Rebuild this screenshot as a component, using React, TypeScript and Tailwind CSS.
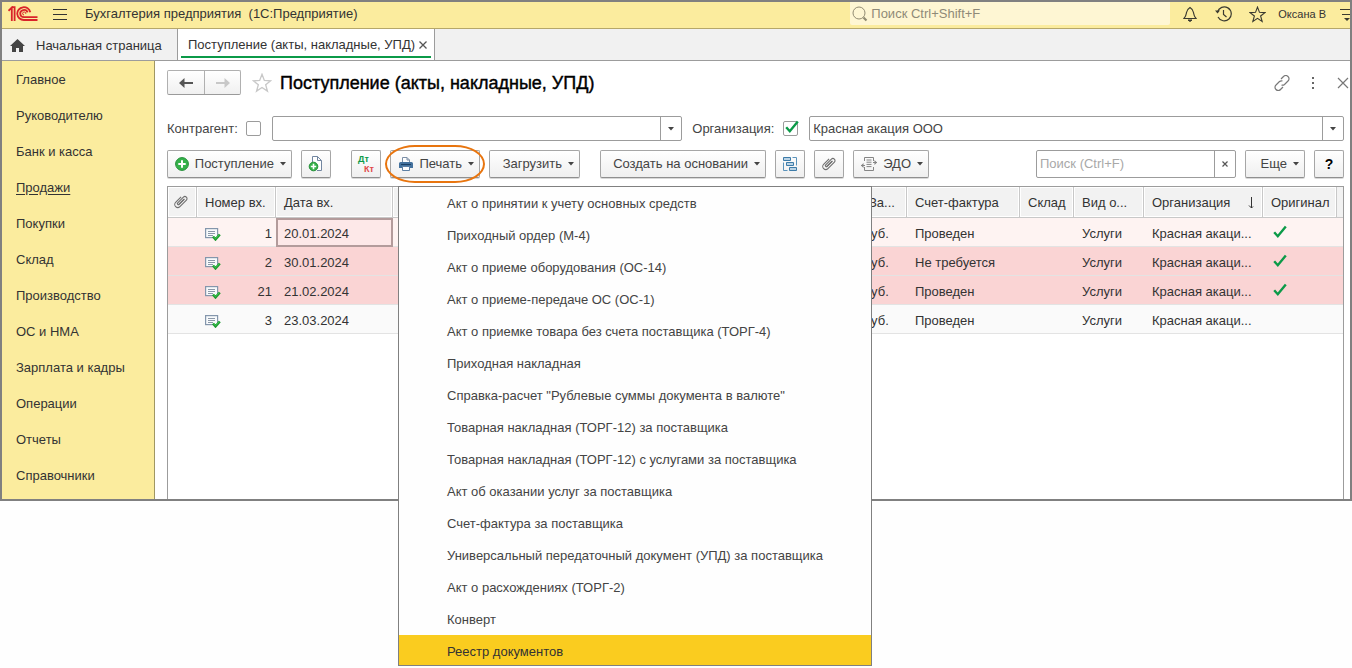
import type { ReactNode } from 'react';

const sections = [
  'Главное', 'Руководителю', 'Банк и касса', 'Продажи', 'Покупки', 'Склад',
  'Производство', 'ОС и НМА', 'Зарплата и кадры', 'Операции', 'Отчеты', 'Справочники',
];

const printForms = [
  'Акт о принятии к учету основных средств',
  'Приходный ордер (М-4)',
  'Акт о приеме оборудования (ОС-14)',
  'Акт о приеме-передаче ОС (ОС-1)',
  'Акт о приемке товара без счета поставщика (ТОРГ-4)',
  'Приходная накладная',
  'Справка-расчет "Рублевые суммы документа в валюте"',
  'Товарная накладная (ТОРГ-12) за поставщика',
  'Товарная накладная (ТОРГ-12) с услугами за поставщика',
  'Акт об оказании услуг за поставщика',
  'Счет-фактура за поставщика',
  'Универсальный передаточный документ (УПД) за поставщика',
  'Акт о расхождениях (ТОРГ-2)',
  'Конверт',
];

const documents = [
  { number: '1', date: '20.01.2024', invoice: 'Проведен', original: true, tone: 'bg-[#fef3f2]' },
  { number: '2', date: '30.01.2024', invoice: 'Не требуется', original: true, tone: 'bg-[#fad4d4]' },
  { number: '21', date: '21.02.2024', invoice: 'Проведен', original: true, tone: 'bg-[#fad4d4]' },
  { number: '3', date: '23.03.2024', invoice: 'Проведен', original: false, tone: 'bg-[#fafafa]' },
];

function Logo() {
  return (
    <svg width="30" height="16" viewBox="0 0 30 16" fill="none" stroke="#d9232a" strokeWidth="1.800" aria-label="1С" role="img">
      <path d="M.5 4.800 3.800 1.500V15M6.600 15V1.200H3.500" />
      <path d="M22.300 6.200A6.600 6.400 0 1 0 15.800 14H29.500" />
      <path d="M19.600 6.400A3.800 3.600 0 1 0 16 11.200H29.500" />
      <path d="M17.800 7.800A1.600 1.500 0 1 0 16 9" strokeWidth="1" />
    </svg>
  );
}

function Caret() {
  return (
    <svg width="6" height="4" viewBox="0 0 6 4" fill="#444" aria-hidden="true" className="shrink-0">
      <path d="M0 0h6L3 3.500z" />
    </svg>
  );
}

function Clip() {
  return (
    <svg width="14" height="14" viewBox="0 0 14 14" fill="none" stroke="#6f6f6f" strokeWidth="1.100" aria-hidden="true">
      <path d="M10.500 4 5.200 9.300a1 1 0 0 1-1.500-1.500l5.700-5.600a2 2 0 0 1 3 2.900l-6.500 6.500a3 3 0 0 1-4.300-4.200l5.500-5.500" />
      <path d="m4.200 9.800 5.800-5.700" />
    </svg>
  );
}

function Check({ size }: { size: number }) {
  return (
    <svg width={size} height={size} viewBox="0 0 14 14" fill="none" stroke="#0b9a48" strokeWidth="2.400" aria-hidden="true">
      <path d="m1.200 7.200 3.600 4L12.800 1.500" />
    </svg>
  );
}

function RowIcon() {
  return (
    <svg width="16" height="14" viewBox="0 0 16 14" fill="none" aria-hidden="true">
      <rect x=".600" y="1.600" width="12" height="9" fill="#f8fafc" stroke="#8496ac" strokeWidth="1.200" />
      <path d="M3 4.500h7M3 6.500h7M3 8.500h5" stroke="#8b98a8" />
      <path d="m8 9.500 2.500 2.800L14.800 7.500" stroke="#1f9b31" strokeWidth="2.600" />
      <path d="m8.500 9.500 2 2.200 3.800-4" stroke="#3ac94e" strokeWidth="1" />
    </svg>
  );
}

function PlusCircle({ size }: { size: number }) {
  return (
    <svg width={size} height={size} viewBox="0 0 14 14" aria-hidden="true" className="shrink-0">
      <circle cx="7" cy="7" r="6.400" fill="#35b24a" stroke="#248f38" />
      <path d="M7 3.300v7.400M3.300 7h7.400" stroke="#fff" strokeWidth="2" />
    </svg>
  );
}

function CopyDoc() {
  return (
    <svg width="16" height="16" viewBox="0 0 16 16" fill="none" aria-hidden="true">
      <path d="M4.500 6V.5h5l4 4v10H9M9.500.5v4h4" fill="#fff" stroke="#7286a0" />
      <circle cx="5.500" cy="10.500" r="4.300" fill="#35b24a" stroke="#248f38" />
      <path d="M5.500 7.800v5.400M2.800 10.500h5.400" stroke="#fff" strokeWidth="1.600" />
    </svg>
  );
}

function Printer() {
  return (
    <svg width="14" height="14" viewBox="0 0 14 14" aria-hidden="true" className="shrink-0">
      <path d="M3.500 5V.5h4.500l2.500 2.500v2M8 .5V3h2.500" fill="#fff" stroke="#7b8ea6" />
      <path d="M1.500 5h11a1.500 1.500 0 0 1 1.500 1.500V11H0V6.500A1.500 1.500 0 0 1 1.500 5z" fill="#44729e" />
      <path d="M2 7.500h10" stroke="#1c4064" />
      <path d="M3.500 9.500h7v4h-7z" fill="#fff" stroke="#5d7fa3" />
    </svg>
  );
}

function Structure() {
  return (
    <svg width="15" height="15" viewBox="0 0 15 15" aria-hidden="true">
      <g fill="#b9d3e6" stroke="#3d7ba8">
        <path d="M.5.500h7v3h-7zM3.500 5.500h7v3h-7zM6.500 10.500h7v3h-7z" />
      </g>
      <path d="M9.500.5h4v8M.5 5.500v8h4" fill="none" stroke="#5b93bb" />
    </svg>
  );
}

function Exchange() {
  return (
    <svg width="16" height="14" viewBox="0 0 16 14" fill="none" stroke="#858585" aria-hidden="true" className="shrink-0">
      <path d="M3.500 4V.5h9V4M3.500 10v3.500h9V10M5.500 3h5M5.500 5.200h5M5.500 7.400h5M5.500 9.600h5" />
      <path d="M0 8.500h4M12 5.500h4" />
      <path d="m2.500 6-2.500 2.500L2.500 11zM13.500 3l2.500 2.500L13.500 8z" fill="#858585" stroke="none" />
    </svg>
  );
}

function Star({ size, color }: { size: number; color: string }) {
  return (
    <svg width={size} height={size} viewBox="0 0 18 18" fill="none" stroke={color} strokeWidth="1.200" aria-hidden="true">
      <path d="m9 1.200 2.100 5.500 5.700.3-4.500 3.600 1.600 5.700L9 13.100l-4.900 3.200 1.600-5.700L1.200 7l5.700-.3z" />
    </svg>
  );
}

function ToolButton({ label, width, children, caret = false }: { label?: string; width: string; children?: ReactNode; caret?: boolean }) {
  return (
    <button
      type="button"
      aria-label={label}
      className={`flex h-7 shrink-0 items-center gap-[6px] rounded-[2px] border border-[#a6a6a6] border-b-[#8f8f8f] bg-linear-to-b from-white to-[#efefef] whitespace-nowrap shadow-[0_1px_0_#d8d8d8] ${caret ? 'justify-end pr-[5px]' : 'justify-center'} ${width}`}
    >
      {children}
      {caret && <Caret />}
    </button>
  );
}

function Picker({ id, grow, value }: { id: string; grow: string; value: string }) {
  return (
    <div className={`relative flex h-[25px] min-w-0 rounded-[2px] border border-[#9c9c9c] bg-white ${grow}`}>
      <select id={id} className="min-w-0 flex-1 appearance-none bg-transparent pt-px pl-[3px] outline-none" defaultValue={value}>
        <option>{value}</option>
      </select>
      <span className="pointer-events-none absolute inset-y-0 right-0 flex w-[21px] items-center justify-center border-l border-[#9c9c9c]">
        <Caret />
      </span>
    </div>
  );
}

function TitleBar() {
  return (
    <header className="flex h-[27px] items-center overflow-hidden border-b border-[#b5a76a] bg-[#fbec9e] pb-[2px] pl-[6px]">
      <Logo />
      <button type="button" aria-label="Главное меню" className="ml-[15px]">
        <svg width="14" height="11" viewBox="0 0 14 11" stroke="#333" aria-hidden="true">
          <path d="M0 .5h14M0 5.500h14M0 10.500h14" />
        </svg>
      </button>
      <span className="ml-[18px] flex-1 whitespace-pre">Бухгалтерия предприятия  (1С:Предприятие)</span>
      <label className="flex h-[23px] w-[320px] items-center gap-[3px] self-start rounded-b-[2px] bg-[#fef6d3] pl-[2px] text-[#8f8a78]">
        <svg width="16" height="16" viewBox="0 0 16 16" fill="none" stroke="#918b72" aria-hidden="true">
          <circle cx="7" cy="7" r="6" />
          <path d="m11.500 11.500 3 3" strokeWidth="2.200" />
        </svg>
        <input aria-label="Поиск" placeholder="Поиск Ctrl+Shift+F" className="min-w-0 flex-1 bg-transparent outline-none placeholder:text-[#8f8a78]" />
      </label>
      <button type="button" aria-label="Уведомления" className="ml-[13px]">
        <svg width="14" height="16" viewBox="0 0 14 16" fill="none" stroke="#3a3a30" aria-hidden="true">
          <path d="M1 12.500c2-2 2-3 2.500-6C4 3.500 5.300 2.500 7 1.500c1.700 1 3 2 3.500 5 .5 3 .5 4 2.500 6z" strokeWidth="1.200" />
          <path d="M5 14h4l-2 1.500z" fill="#3a3a30" />
        </svg>
      </button>
      <button type="button" aria-label="История" className="ml-[18px]">
        <svg width="17" height="16" viewBox="0 0 17 16" fill="none" stroke="#3a3a30" strokeWidth="1.200" aria-hidden="true">
          <path d="M2.500 6A7 7 0 1 1 3 11M8.500 4v4.500l3 2.500" />
          <path d="M0 4.500h5L2.500 7.500z" fill="#3a3a30" stroke="none" />
        </svg>
      </button>
      <button type="button" aria-label="Избранное" className="ml-[17px]"><Star size={17} color="#3a3a30" /></button>
      <button type="button" className="ml-3 text-[11px] whitespace-nowrap">Оксана В</button>
      <button type="button" aria-label="Настройки" className="ml-[14px]">
        <svg width="10" height="14" viewBox="0 0 10 14" stroke="#3a3a30" aria-hidden="true">
          <path d="M0 2.500h10M2 7.500h8" />
          <path d="M4 11h6L7 14z" fill="#3a3a30" stroke="none" />
        </svg>
      </button>
    </header>
  );
}

function Tabs() {
  return (
    <nav className="flex h-8 items-stretch border-b border-[#9c9c9c] bg-[#f1f1f1]">
      <a href="#home" className="flex w-[175px] items-center pt-[2px] pl-[8px]">
        <svg width="15" height="13" viewBox="0 0 15 13" fill="#444" aria-hidden="true">
          <path d="M7.500 0 15 7h-2v6H9V9H6v4H2V7H0z" />
        </svg>
        <span className="ml-[11px] whitespace-nowrap">Начальная страница</span>
      </a>
      <div className="flex w-[258px] border-x border-[#9c9c9c] bg-white px-[3px] pb-[2px]">
        <div className="flex flex-1 items-center justify-between border-b-2 border-[#0b9a48] pt-[4px] pr-1 pl-[7px]">
          <a href="#receipts" className="whitespace-nowrap">Поступление (акты, накладные, УПД)</a>
          <button type="button" aria-label="Закрыть вкладку">
            <svg width="8" height="8" viewBox="0 0 8 8" stroke="#555" strokeWidth="1.300" aria-hidden="true">
              <path d="m.5.500 7 7M7.500.500l-7 7" />
            </svg>
          </button>
        </div>
      </div>
    </nav>
  );
}

function Heading() {
  return (
    <div className="-mr-[5px] flex items-center">
      <div className="flex h-[25px] shrink-0 rounded-[2px] border border-[#b0b0b0] border-b-[#9a9a9a] bg-linear-to-b from-white to-[#f0f0f0]">
        <button type="button" aria-label="Назад" className="flex w-9 items-center justify-center">
          <svg width="14" height="10" viewBox="0 0 14 10" fill="#555" aria-hidden="true">
            <path d="M0 5 5.500 0v4H14v2H5.500v4z" />
          </svg>
        </button>
        <button type="button" aria-label="Вперед" className="flex w-9 items-center justify-center border-l border-[#b0b0b0]">
          <svg width="14" height="10" viewBox="0 0 14 10" fill="#c8c8c8" aria-hidden="true">
            <path d="M14 5 8.500 0v4H0v2h8.500v4z" />
          </svg>
        </button>
      </div>
      <button type="button" aria-label="В избранное" className="ml-[11px]"><Star size={20} color="#c8c8c8" /></button>
      <h1 className="ml-2 flex-1 text-[18px] whitespace-nowrap text-black [-webkit-text-stroke:0.4px_black]">Поступление (акты, накладные, УПД)</h1>
      <button type="button" aria-label="Ссылка">
        <svg width="16" height="16" viewBox="0 0 16 16" fill="none" stroke="#777" strokeWidth="1.200" aria-hidden="true">
          <path d="m7 4 2.500-2.500a3 3 0 0 1 4.500 0 3 3 0 0 1 0 4.500L10.500 9.500a3 3 0 0 1-3 .5M9 12l-2.500 2.500a3 3 0 0 1-4.500 0 3 3 0 0 1 0-4.500L5.500 6.500a3 3 0 0 1 3-.5" />
        </svg>
      </button>
      <button type="button" aria-label="Действия" className="ml-[21px]">
        <svg width="4" height="12" viewBox="0 0 4 12" fill="#666" aria-hidden="true">
          <path d="M1 0h2v2H1zM1 5h2v2H1zM1 10h2v2H1z" />
        </svg>
      </button>
      <button type="button" aria-label="Закрыть" className="ml-[22px]">
        <svg width="12" height="12" viewBox="0 0 12 12" stroke="#777" strokeWidth="1.200" aria-hidden="true">
          <path d="m1 1 10 10M11 1 1 11" />
        </svg>
      </button>
    </div>
  );
}

function Filters() {
  return (
    <div className="mt-[21px] flex items-center text-[#444]">
      <label htmlFor="partner" className="w-[79px] shrink-0">Контрагент:</label>
      <input type="checkbox" aria-label="Отбор по контрагенту" className="h-[15px] w-[15px] shrink-0 appearance-none rounded-[2px] border border-[#9c9c9c] bg-white" />
      <Picker id="partner" grow="ml-[11px] flex-[410]" value="" />
      <label htmlFor="company" className="ml-[10px] w-[81px] shrink-0">Организация:</label>
      <span className="relative ml-[10px] flex shrink-0">
        <input type="checkbox" defaultChecked aria-label="Отбор по организации" className="h-[15px] w-[15px] appearance-none rounded-[2px] border border-[#9c9c9c] bg-white" />
        <span className="pointer-events-none absolute bottom-[2px] left-[2px]"><Check size={14} /></span>
      </span>
      <Picker id="company" grow="ml-[11px] flex-[535]" value="Красная акация ООО" />
    </div>
  );
}

function PrintMenu() {
  return (
    <div role="menu" className="absolute top-[36px] left-2 z-20 w-[474px] border border-[#808080] bg-[#fefefe]">
      {printForms.map((name) => (
        <button key={name} type="button" role="menuitem" className="flex h-8 w-full items-center pt-[2px] pl-12 whitespace-nowrap text-[#444]">
          {name}
        </button>
      ))}
      <button type="button" role="menuitem" className="flex h-[30px] w-full items-center bg-[#facc1f] pt-[4px] pl-12 whitespace-nowrap text-[#333]">
        Реестр документов
      </button>
    </div>
  );
}

function Toolbar() {
  return (
    <div className="mt-[9px] flex items-center gap-[9px] text-[#444]">
      <ToolButton width="w-[125px]" caret><PlusCircle size={14} />Поступление</ToolButton>
      <ToolButton width="w-[30px]" label="Скопировать"><CopyDoc /></ToolButton>
      <span className="ml-[11px] flex">
        <ToolButton width="w-[30px]">
          <span className="flex w-4 flex-col text-[9px] leading-[10px] font-bold">
            <span className="self-start text-[#0b9a48]">Дт</span>
            <span className="self-end text-[#e04848]">Кт</span>
          </span>
        </ToolButton>
      </span>
      <div className="relative">
        <ToolButton width="w-[90px]" caret><Printer />Печать</ToolButton>
        <span className="pointer-events-none absolute -inset-x-[5px] -inset-y-[5px] z-30 rounded-[30px/19px] border-2 border-[#e8750f]" />
        <PrintMenu />
      </div>
      <ToolButton width="w-[91px]" caret>Загрузить</ToolButton>
      <span className="ml-[11px] flex"><ToolButton width="w-[166px]" caret>Создать на основании</ToolButton></span>
      <ToolButton width="w-[30px]" label="Структура подчиненности"><Structure /></ToolButton>
      <ToolButton width="w-[30px]" label="Файлы"><Clip /></ToolButton>
      <ToolButton width="w-[76px]" caret><Exchange />ЭДО</ToolButton>
      <div className="ml-auto flex h-7 w-[200px] rounded-[2px] border border-[#9c9c9c] bg-white">
        <input aria-label="Поиск в списке" placeholder="Поиск (Ctrl+F)" className="min-w-0 flex-1 bg-transparent pl-[3px] outline-none placeholder:text-[#a8a8a8]" />
        <button type="button" aria-label="Очистить" className="flex w-[21px] items-center justify-center border-l border-[#9c9c9c]">
          <svg width="6" height="6" viewBox="0 0 6 6" stroke="#555" strokeWidth="1.200" aria-hidden="true">
            <path d="m.5.500 5 5M5.500.500l-5 5" />
          </svg>
        </button>
      </div>
      <ToolButton width="w-[60px]" caret>Еще</ToolButton>
      <ToolButton width="w-[30px]"><span className="text-[14px] font-bold text-black">?</span></ToolButton>
    </div>
  );
}

const headCell = 'h-[31px] border-r border-b border-[#c8c8c8] bg-[#f2f2f2] px-2 pt-[2px] text-left font-normal whitespace-nowrap shadow-[inset_0_0_0_1px_#fff]';
const cellLine = 'border-b border-[#e3e3e3] whitespace-nowrap overflow-hidden';
const bodyCell = `${cellLine} px-2 pt-[3px]`;

function DocumentTable() {
  return (
    <div className="mt-2 flex-1 overflow-hidden border border-b-0 border-[#9c9c9c] bg-white">
      <table className="w-full table-fixed border-separate border-spacing-0">
        <colgroup>
          <col className="w-[29px]" />
          <col className="w-[79px]" />
          <col className="w-[117px]" />
          <col />
          <col className="w-[46px]" />
          <col className="w-[113px]" />
          <col className="w-[54px]" />
          <col className="w-[70px]" />
          <col className="w-[119px]" />
          <col className="w-[74px]" />
          <col className="w-[6px]" />
        </colgroup>
        <thead>
          <tr>
            <th className="h-[31px] border-r border-b border-[#c8c8c8] bg-[#f2f2f2] pl-[6px] shadow-[inset_0_0_0_1px_#fff]"><Clip /></th>
            <th className={headCell}>Номер вх.</th>
            <th className={headCell}>Дата вх.</th>
            <th className={headCell} />
            <th className={headCell}>За...</th>
            <th className={headCell}>Счет-фактура</th>
            <th className={headCell}>Склад</th>
            <th className={headCell}>Вид о...</th>
            <th className={headCell}>
              <span className="flex items-center justify-between">
                Организация
                <svg width="6" height="12" viewBox="0 0 6 12" fill="none" stroke="#333" aria-hidden="true">
                  <path d="M3.500 0v11M1 8.500l2.500 2.500L5 9.500" />
                </svg>
              </span>
            </th>
            <th className={headCell}>Оригинал</th>
            <th className="border-b border-[#c8c8c8] bg-[#f2f2f2]" />
          </tr>
        </thead>
        <tbody>
          {documents.map((doc, index) => (
            <tr key={doc.number} className={`h-[29px] ${doc.tone}`}>
              <td className={bodyCell} />
              <td className={`${cellLine} pt-[3px] pr-1 pl-2`}>
                <span className="flex items-center justify-between"><RowIcon />{doc.number}</span>
              </td>
              <td className={index === 0 ? 'border-2 border-[#b39b9b] bg-[#fde8e8] px-[6px] pt-[2px]' : bodyCell}>{doc.date}</td>
              <td className={bodyCell} />
              <td className={`${cellLine} pt-[3px] pl-[3px]`}>руб.</td>
              <td className={bodyCell}>{doc.invoice}</td>
              <td className={bodyCell} />
              <td className={bodyCell}>Услуги</td>
              <td className={bodyCell}>Красная акаци...</td>
              <td className={`${cellLine} pl-[10px]`}>{doc.original && <Check size={14} />}</td>
              <td className={cellLine} />
            </tr>
          ))}
        </tbody>
      </table>
    </div>
  );
}

export default function App() {
  return (
    <div className="min-h-screen bg-[#fefefe] pb-[167px] font-['Liberation_Sans',Arial,sans-serif] text-[13px] leading-4 text-[#333]">
      <div className="border-2 border-[#808080]">
        <TitleBar />
        <Tabs />
        <div className="flex">
          <aside className="w-[153px] shrink-0 border-r border-[#a09763] bg-[#fbec9e] pb-[6px]">
            <nav className="flex flex-col">
              {sections.map((name) => (
                <a key={name} href="#section" className={`flex h-9 items-center pt-[2px] pl-[14px] ${name === 'Продажи' ? 'underline underline-offset-2' : ''}`}>
                  {name}
                </a>
              ))}
            </nav>
          </aside>
          <main className="flex min-w-0 flex-1 flex-col bg-white pt-[9px] pr-[6px] pl-3">
            <Heading />
            <Filters />
            <Toolbar />
            <DocumentTable />
          </main>
        </div>
      </div>
    </div>
  );
}
